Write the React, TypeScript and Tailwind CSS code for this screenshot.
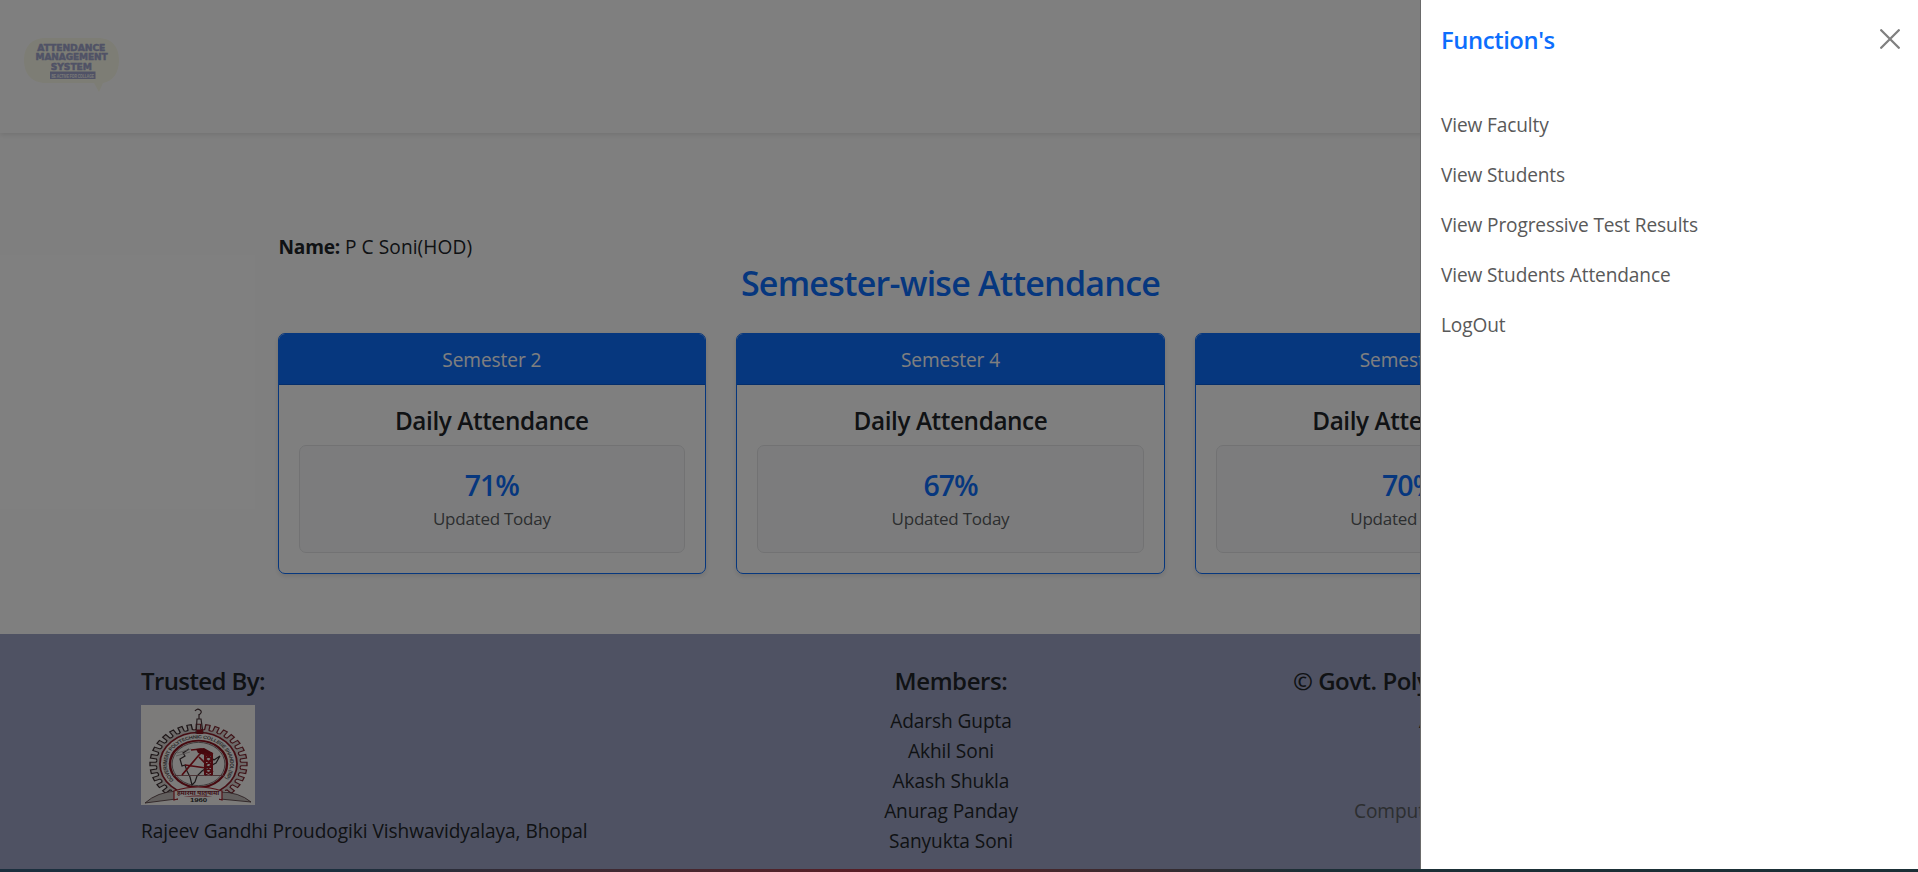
import React from "react";

const navItems = [
  "View Faculty",
  "View Students",
  "View Progressive Test Results",
  "View Students Attendance",
  "LogOut",
];

const semesters = [
  { name: "Semester 2", value: "71%" },
  { name: "Semester 4", value: "67%" },
  { name: "Semester 6", value: "70%" },
];

const members = ["Adarsh Gupta", "Akhil Soni", "Akash Shukla", "Anurag Panday", "Sanyukta Soni"];

function BrandLogo() {
  return (
    <svg className="ml-[22px] mt-[35px] h-[62px] w-[98px] overflow-visible" viewBox="0 0 98 62">
      <path d="M24 3H76C90 3 97 12 97 25S91 46 81 48L77 57L72 48H24C10 48 2 39 2 25S10 3 24 3Z" fill="#fbfbea" />
      <g fill="#a0a5cc" stroke="#a0a5cc" strokeWidth="0.500" fontFamily="'DejaVu Sans', sans-serif" fontWeight="700" fontSize="9.500" textAnchor="middle">
        <text x="49.300" y="15.700" textLength="68" lengthAdjust="spacingAndGlyphs">ATTENDANCE</text>
        <text x="49.500" y="25.200" textLength="72" lengthAdjust="spacingAndGlyphs">MANAGEMENT</text>
        <text x="49.300" y="34.700" textLength="41" lengthAdjust="spacingAndGlyphs">SYSTEM</text>
      </g>
      <rect x="28" y="36.500" width="45.500" height="7.500" fill="#a0a5cc" />
      <text x="50.700" y="42.500" fontSize="6.200" fontWeight="700" fontFamily="'Liberation Sans', sans-serif" fill="#f3f3f0" textAnchor="middle" textLength="42.500" lengthAdjust="spacingAndGlyphs">BE ACTIVE FOR COLLAGE</text>
    </svg>
  );
}

const teeth = Array.from({ length: 32 }, (_, i) => i * 11.25).filter((a) => a < 140 || a > 220);

function CollegeSeal() {
  return (
    <svg className="h-[100px] w-[114px] bg-[#f8f6f4]" viewBox="0 0 114 100">
      <g transform="translate(57.500 59) scale(1 0.82)">
        <circle r="42" fill="#d8d3d1" />
        {teeth.map((a) => (
          <path key={a} d="M-4.100 -41.500L-2.200 -42.500V-48.500H2.200V-42.500L4.100 -41.500" transform={`rotate(${a})`} fill="#d8d3d1" stroke={a < 150 ? "#7d2730" : "#3a2c2f"} strokeWidth="1.300" />
        ))}
        <circle r="38.500" fill="#f8f6f4" stroke="#8c1c28" strokeWidth="1.800" />
        <circle r="28.500" fill="#f8f6f4" stroke="#8c1420" strokeWidth="2.400" />
        <circle r="26.400" fill="none" stroke="#3c2c30" strokeWidth="0.700" />
        <path id="sealArc" d="M-24.500 20A31.500 31.500 0 1 1 24.500 20" fill="none" />
        <text fontSize="5.600" fontWeight="700" fill="#5a5658" fontFamily="'Liberation Sans', sans-serif">
          <textPath href="#sealArc" textLength="138">GOVERNMENT POLYTECHNIC COLLEGE SHAHDOL (MP)</textPath>
        </text>
      </g>
      <path d="M54 6Q56 3 59 5T58 10V12M56 14L55 28H62L60 14ZM58 9V14" fill="none" stroke="#4a3438" strokeWidth="1.200" />
      <path d="M55.500 24.500H62V29H55.500Z" fill="#8c1420" />
      <path d="M48 44L42 48L44 51L39 54L41 61L44 60L46 66L49 72L51 80L54 77L56 71L61 66L67 62L75 58L79 51L73 55L68 51" fill="none" stroke="#3a3033" strokeWidth="1.200" />
      <path d="M36 48L50 44M35 51L49 47" stroke="#aaa4a4" strokeWidth="0.800" />
      <path d="M31 70.500H84" stroke="#8d5a5f" strokeWidth="0.900" />
      <path d="M41 70L58 50L62 46M44 60L65 63M50 45L60 44L72 49M58 52L66 60" fill="none" stroke="#a51420" strokeWidth="1.700" />
      <path d="M55 44L63 43L72 48L67 51L57 48Z" fill="#8b101c" />
      <path d="M64 48V70M71 48V70M64 48L71 54L64 60L71 66L64 70M71 48L64 54L71 60L64 66L71 70" fill="none" stroke="#9d1420" strokeWidth="2" />
      <path d="M4 98Q16 87 36 86L35 94H79V87Q98 87 110 97L79 94H35Z" fill="#c4bfbd" stroke="#4a3236" strokeWidth="0.800" />
      <path d="M33 86Q57 78 81 86V95Q57 87 33 95Z" fill="#f8f6f4" stroke="#a8202c" strokeWidth="1.200" />
      <text x="57" y="90" fontSize="6.200" fontWeight="700" fill="#7d2530" textAnchor="middle" fontFamily="'Noto Sans', sans-serif" textLength="42" lengthAdjust="spacingAndGlyphs">हमारमा यातुयामा</text>
      <rect x="37" y="91.600" width="41" height="6.800" fill="#f8f6f4" />
      <text x="57.500" y="97" fontSize="6.200" fontWeight="700" fill="#303030" textAnchor="middle" fontFamily="'Liberation Sans', sans-serif" textLength="17" lengthAdjust="spacingAndGlyphs">1960</text>
    </svg>
  );
}

function SemesterCard({ name, value }: { name: string; value: string }) {
  return (
    <section className="overflow-hidden rounded-[7px] border border-[#0d6efd] text-center shadow-[0_2px_5px_rgba(0,0,0,0.12)]">
      <div className="h-[51px] border-b border-[#0b5cd6] bg-[#0d6efd] pt-[11px] text-white">{name}</div>
      <div className="px-5 pt-[21px] pb-5">
        <h5 className="mb-[9px] text-[24.300px] leading-[30px] font-semibold tracking-[-0.4px]">Daily Attendance</h5>
        <div className="rounded-[7px] border border-[#e4e5e7] bg-[#f8f9fa] px-5 pt-[21px] pb-[18px]">
          <h4 className="text-[28.500px] leading-9 font-semibold tracking-[-1px] text-[#0d6efd]">{value}</h4>
          <p className="pt-px text-[17px] tracking-[-0.25px] text-[#585c60]">Updated Today</p>
        </div>
      </div>
    </section>
  );
}

function Dashboard() {
  return (
    <div className="flex h-full w-[1902px] flex-col">
      <header className="h-[133px] w-[1918px] shrink-0 shadow-[0_2px_5px_rgba(0,0,0,0.1)]">
        <BrandLogo />
      </header>
      <main className="ml-[277.500px] mt-[99px] h-[402px] w-[1346px] shrink-0">
        <p className="pl-px"><b className="tracking-[-0.2px]">Name:</b> <span className="tracking-[0.1px]">P C Soni(HOD)</span></p>
        <h3 className="mb-[29px] text-center text-[34px] leading-[42px] font-semibold tracking-[-0.75px] text-[#0d6efd]">Semester-wise Attendance</h3>
        <div className="grid grid-cols-3 gap-[30px]">
          {semesters.map((s) => <SemesterCard key={s.name} {...s} />)}
        </div>
      </main>
      <footer className="w-[1918px] grow bg-[#9fa4c6] pt-[32px]">
        <div className="ml-[141px] grid w-[1620px] grid-cols-3">
          <div>
            <h5 className="mb-[9px] text-[24px] leading-[30px] font-semibold tracking-[-0.600px]">Trusted By:</h5>
            <CollegeSeal />
            <p className="mt-[11px] tracking-[-0.070px]">Rajeev Gandhi Proudogiki Vishwavidyalaya, Bhopal</p>
          </div>
          <div className="text-center">
            <h5 className="mb-[10px] text-[24px] leading-[30px] font-semibold tracking-[-0.4px]">Members:</h5>
            {members.map((m) => <p key={m}>{m}</p>)}
          </div>
          <div className="pl-[72px] whitespace-nowrap">
            <h5 className="mb-[10px] text-[24px] leading-[30px] font-semibold tracking-[-0.5px]">© Govt. Polytechnic College Shahdol</h5>
            <p className="pl-[126px]">All Rights Reserved.</p>
            <p className="mt-[60px] pl-[61px] text-[#585c60]">Computer Science &amp; Engineering</p>
          </div>
        </div>
      </footer>
    </div>
  );
}

function Drawer() {
  return (
    <aside className="absolute top-0 right-0 h-full w-[498px] border-l border-[#6a6a6a] bg-white pl-[20px]">
      <div className="flex items-start justify-between pt-[25px] pr-[18px]">
        <h5 className="text-[23.800px] leading-[30px] font-semibold tracking-[-0.4px] text-[#0d6efd]">Function's</h5>
        <button aria-label="Close" className="mt-[4px]">
          <svg className="h-5 w-5" viewBox="0 0 20 20" fill="none" stroke="#808080" strokeWidth="2.300" strokeLinecap="round">
            <path d="M1.200 1.200L18.800 18.800M18.800 1.200L1.200 18.800" />
          </svg>
        </button>
      </div>
      <nav className="mt-[55px] flex flex-col gap-5 tracking-[-0.130px] text-[#595959]">
        {navItems.map((n) => <a key={n}>{n}</a>)}
      </nav>
    </aside>
  );
}

export default function App() {
  return (
    <div className="flex h-[872px] w-[1918px] flex-col overflow-hidden bg-white font-['Open_Sans','Noto_Sans',sans-serif] text-[19.100px] leading-[30px] tracking-[-0.090px] text-[#212529]">
      <div className="relative h-[869px] shrink-0 overflow-hidden">
        <Dashboard />
        <div className="absolute inset-0 bg-black/50" />
        <Drawer />
      </div>
      <div className="h-[3px] bg-linear-to-r from-[#1b2f3e] from-18% via-[#5a1c24] via-46% to-[#1b2f36] to-68%" />
    </div>
  );
}
